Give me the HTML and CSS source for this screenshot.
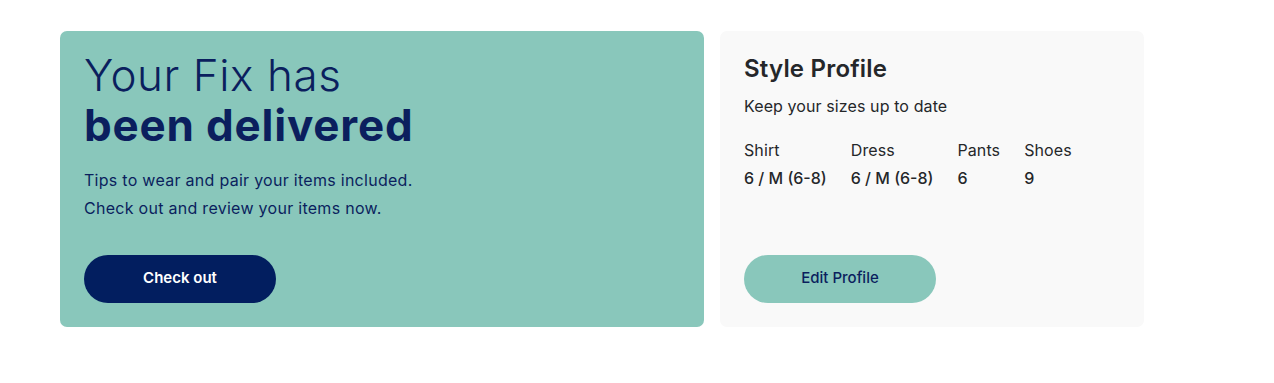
FILE: index.html
```html
<!DOCTYPE html>
<html lang="en">
<head>
<meta charset="utf-8">
<title>Your Fix</title>
<link rel="stylesheet" href="styles.css">
</head>
<body>
<main class="row">
  <section class="card fix">
    <div class="fix-top">
      <h1 class="fix-title"><span class="light">Your Fix has</span><br><strong>been delivered</strong></h1>
      <p class="fix-text">Tips to wear and pair your items included.<br>Check out and review your items now.</p>
    </div>
    <a class="btn btn-navy" href="#">Check out</a>
  </section>
  <section class="card profile">
    <div class="profile-top">
      <h2 class="profile-title">Style Profile</h2>
      <p class="profile-sub">Keep your sizes up to date</p>
      <div class="sizes">
        <div class="size"><span class="size-label">Shirt</span><span class="size-value">6 / M (6-8)</span></div>
        <div class="size"><span class="size-label">Dress</span><span class="size-value">6 / M (6-8)</span></div>
        <div class="size"><span class="size-label">Pants</span><span class="size-value">6</span></div>
        <div class="size"><span class="size-label">Shoes</span><span class="size-value">9</span></div>
      </div>
    </div>
    <a class="btn btn-teal" href="#">Edit Profile</a>
  </section>
</main>
</body>
</html>
```
FILE: styles.css
```css
* { box-sizing: border-box; }
html, body { margin: 0; padding: 0; background: #ffffff; }
body {
  font-family: Inter, "Noto Sans", "Liberation Sans", sans-serif;
  -webkit-font-smoothing: antialiased;
}
.row {
  display: flex;
  gap: 16px;
  padding: 31px 0 0 60px;
}
.card {
  border-radius: 7px;
  padding: 24px;
  height: 296px;
  display: flex;
  flex-direction: column;
  justify-content: space-between;
  align-items: flex-start;
}
.fix {
  width: 644px;
  background: #89c7bb;
  color: #0b1f5e;
}
.profile {
  width: 424px;
  background: #f9f9f9;
  color: #25272a;
}
.fix-title {
  margin: 0;
  font-size: 44px;
  line-height: 50px;
  font-weight: 600;
  margin-top: -5px;
}
.fix-title .light { font-weight: 300; letter-spacing: 0.55px; }
.fix-title strong { font-weight: 650; letter-spacing: 0.8px; }
.fix-text {
  margin: 16px 0 0;
  font-size: 16px;
  line-height: 28px;
  letter-spacing: 0.28px;
}
.btn {
  display: flex;
  align-items: center;
  justify-content: center;
  width: 192px;
  height: 48px;
  border-radius: 24px;
  font-size: 15px;
  text-decoration: none;
  padding-bottom: 3px;
}
.btn-navy {
  background: #021e5f;
  color: #ffffff;
  font-weight: 600;
}
.btn-teal {
  background: #89c7bb;
  color: #0b1f5e;
  font-weight: 500;
}
.profile-title {
  margin: 0;
  font-size: 24px;
  line-height: 30px;
  font-weight: 600;
  margin-top: -1px;
  letter-spacing: 0.2px;
}
.profile-sub {
  margin: 10px 0 0;
  font-size: 16px;
  line-height: 24px;
  letter-spacing: 0.1px;
}
.sizes {
  display: flex;
  gap: 24px;
  margin-top: 18px;
}
.size {
  display: flex;
  flex-direction: column;
}
.size-label {
  font-size: 16px;
  line-height: 28px;
  letter-spacing: 0.1px;
}
.size-value {
  font-size: 16px;
  line-height: 28px;
  font-weight: 500;
}
```
